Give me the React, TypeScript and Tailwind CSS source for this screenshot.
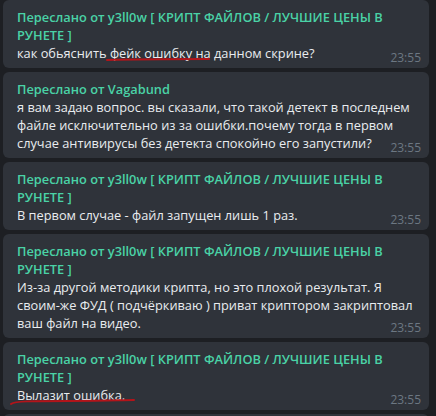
import React from "react";

const NAME = "Переслано от y3ll0w [ КРИПТ ФАЙЛОВ / ЛУЧШИЕ ЦЕНЫ В РУНЕТЕ ]";

function Bubble({ name, children }: { name: string; children: React.ReactNode }) {
  return (
    <div className="relative shrink-0 rounded-[6px] bg-[#2f333a] pl-[14px] pr-[14px] pt-[8px] pb-[6px]">
      <div className="font-semibold text-[#4ad2a6]">{name}</div>
      <div className="text-[#e9ecef]">
        {children}
        <span className="inline-block w-[38px]" />
      </div>
      <div className="absolute right-[8px] bottom-[2px] text-[12px] leading-[16px] text-[#6c7782]">23:55</div>
    </div>
  );
}

export default function App() {
  return (
    <div
      className="w-[436px] h-[416px] overflow-hidden bg-[#1d1f23] pl-[3px] pr-[7px] flex flex-col gap-[4px] text-[12.8px] leading-[18px]"
      style={{ fontFamily: '"Open Sans", "Noto Sans", sans-serif' }}
    >
      <Bubble name={NAME}>
        как обьяснить{" "}
        <span className="relative">
          фейк ошибку
          <svg className="absolute left-[-4px] top-[12px]" width="104" height="6" viewBox="0 0 104 6">
            <path d="M1 4 C 30 3, 70 3, 103 3" stroke="#b3141a" strokeWidth="2" fill="none" strokeLinecap="round" />
          </svg>
        </span>{" "}
        на данном скрине?
      </Bubble>
      <Bubble name="Переслано от Vagabund">
        я вам задаю вопрос. вы сказали, что такой детект в последнем файле исключительно из за ошибки.почему тогда в первом случае антивирусы без детекта спокойно его запустили?
      </Bubble>
      <Bubble name={NAME}>В первом случае - файл запущен лишь 1 раз.</Bubble>
      <Bubble name={NAME}>
        Из-за другой методики крипта, но это плохой результат. Я своим-же ФУД ( подчёркиваю ) приват криптором закриптовал ваш файл на видео.
      </Bubble>
      <Bubble name={NAME}>
        <span className="relative">
          Вылазит ошибка.
          <svg className="absolute left-[-7px] top-[12px]" width="126" height="8" viewBox="0 0 126 8">
            <path d="M1 6 C 5 3, 20 3, 60 3 S 110 2, 124 2" stroke="#b3141a" strokeWidth="2" fill="none" strokeLinecap="round" />
          </svg>
        </span>
      </Bubble>
      <div className="rounded-[6px] bg-[#2f333a] h-[40px] shrink-0" />
    </div>
  );
}
